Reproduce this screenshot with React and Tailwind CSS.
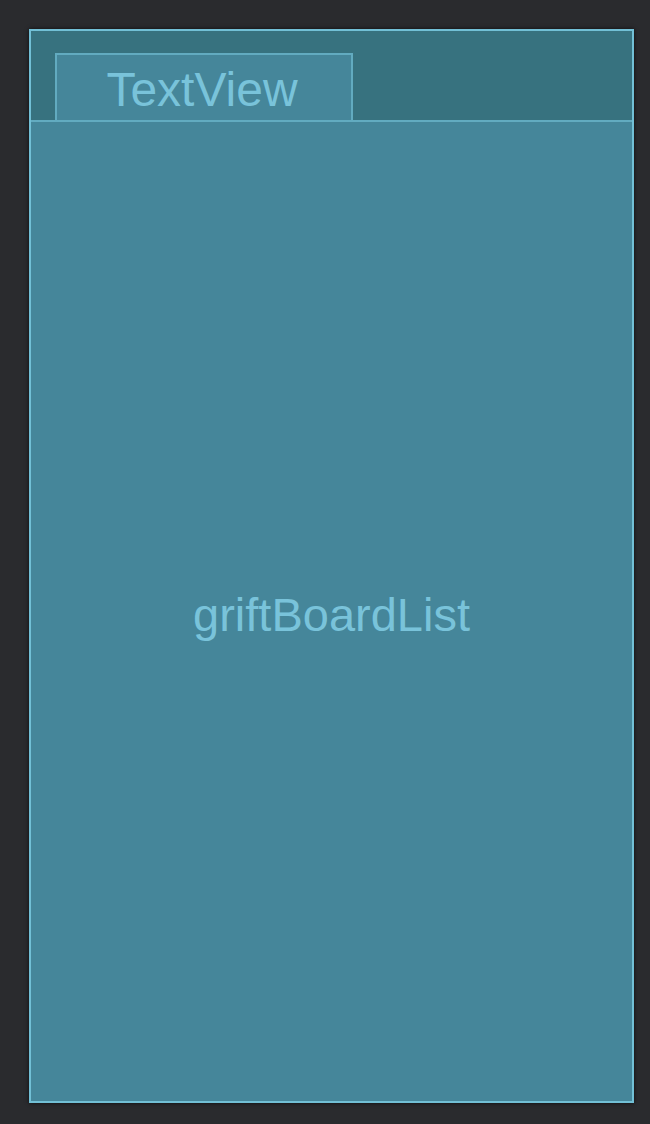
import React from 'react';

const App = () => {
  return (
    <div className="w-[650px] h-[1124px] bg-[#2a2b2e] pt-[29px] pl-[29px]" style={{ fontFamily: '"Liberation Sans", Arial, sans-serif' }}>
      {/* Layout frame */}
      <div className="w-[605px] h-[1074px] flex flex-col border-2 border-[#72c0d6] bg-[#37727f] shadow-[0_0_4px_rgba(0,0,0,0.7)]">
        {/* Header */}
        <div className="h-[89px] pl-[24px] pt-[22px] flex">
          <div className="w-[298px] h-[67px] flex items-center justify-center border-2 border-b-0 border-[#62abc0] bg-[#45869a]">
            <span className="text-[48px] leading-none text-[#79c3da] pt-[4px] pr-[4px]">TextView</span>
          </div>
        </div>
        {/* List */}
        <div className="flex-1 flex items-center justify-center border-t-2 border-[#62abc0] bg-[#45869a]">
          <span className="text-[47px] leading-none text-[#79c3da] pt-[6px]">griftBoardList</span>
        </div>
      </div>
    </div>
  );
};

export default App;
